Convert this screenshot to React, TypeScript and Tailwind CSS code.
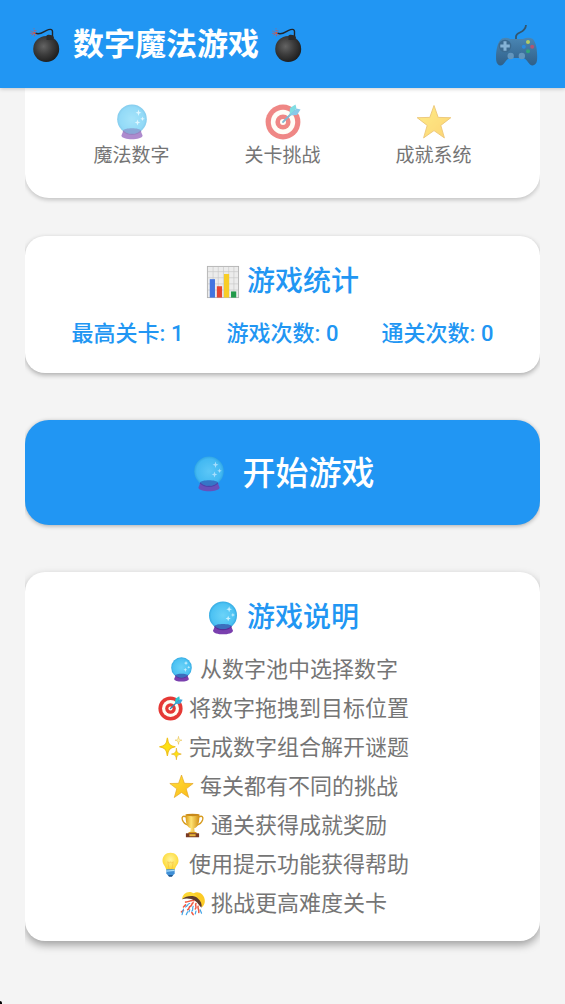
import type { ComponentType, ReactNode } from "react";

interface IconProps {
  className?: string;
}

// Gradients shared by all the icons on the page
function IconDefs() {
  return (
    <svg width="0" height="0" className="absolute" aria-hidden="true">
      <defs>
        <radialGradient id="bombBody" cx="0.4" cy="0.4" r="0.65">
          <stop offset="0" stopColor="#646464" />
          <stop offset="0.5" stopColor="#3c3c3c" />
          <stop offset="1" stopColor="#1c1c1c" />
        </radialGradient>
        <radialGradient id="ballGlass" cx="0.5" cy="0.5" r="0.52">
          <stop offset="0" stopColor="#6bd3f8" />
          <stop offset="0.8" stopColor="#4cc2f3" />
          <stop offset="1" stopColor="#2fa5de" />
        </radialGradient>
        <linearGradient id="starFill" x1="0" y1="0" x2="1" y2="1">
          <stop offset="0" stopColor="#ffe23b" />
          <stop offset="1" stopColor="#fbb818" />
        </linearGradient>
        <linearGradient id="padBody" x1="0" y1="0" x2="0" y2="1">
          <stop offset="0" stopColor="#4a86b4" />
          <stop offset="1" stopColor="#2f5f88" />
        </linearGradient>
        <linearGradient id="cupFill" x1="0" y1="0" x2="1" y2="0">
          <stop offset="0" stopColor="#d99a16" />
          <stop offset="0.4" stopColor="#ffe372" />
          <stop offset="1" stopColor="#d08c10" />
        </linearGradient>
        <radialGradient id="bulbFill" cx="0.5" cy="0.4" r="0.6">
          <stop offset="0" stopColor="#fff59a" />
          <stop offset="1" stopColor="#fdd62c" />
        </radialGradient>
      </defs>
    </svg>
  );
}

function BombIcon({ className }: IconProps) {
  return (
    <svg viewBox="0 0 36 36" className={className} aria-hidden="true">
      <path d="M25.5 9V4.5C25.5 2.5 24 2 21.5 2.6C17 3.8 14 8.5 8.5 6.2" fill="none" stroke="#20252a" strokeWidth="1.4" />
      <path
        d="M7.5 6L3.5 4M7.5 6L4 8.5M7.5 6L7 1.5M7.5 6L9.5 2.5M7.5 6L7.5 10M7.5 6L3 6.5M7.5 6L10.5 8.5"
        stroke="#e0503f"
        strokeWidth="0.9"
        strokeDasharray="1.2 0.8"
      />
      <circle cx="19.2" cy="22" r="13" fill="url(#bombBody)" />
      <path d="M19.5 8.5C20.5 7 25.5 7.5 27 10L26.5 13H19.5Z" fill="#2c2c2c" />
    </svg>
  );
}

function GamepadIcon({ className }: IconProps) {
  return (
    <svg viewBox="0 0 44 44" className={className} aria-hidden="true">
      <path d="M21 15V12.5C21 7.5 30.5 9.5 31 1" fill="none" stroke="#33566f" strokeWidth="1.8" />
      <path
        d="M7 14.5C10 13.2 13 13.6 15.5 15H28C31 13.4 34.5 13.2 37.5 14.8C42 18.5 42.6 31 42 36.5C41.6 40.5 38 42.8 35 40.5C32.5 38 31 34.8 28.5 34H14.5C12 34.8 10.5 38 8 40.5C5 43 1.6 40.5 1.2 36.5C.6 31 1.5 18 7 14.5Z"
        fill="url(#padBody)"
      />
      <circle cx="10" cy="22" r="6.3" fill="#3b6a90" />
      <path d="M8.5 17.3H11.5V20.5H14.8V23.5H11.5V26.7H8.5V23.5H5.3V20.5H8.5Z" fill="#85b3d6" />
      <circle cx="33" cy="18" r="2" fill="#b3cc66" />
      <circle cx="37.2" cy="22.7" r="2" fill="#b05575" />
      <circle cx="33" cy="27.2" r="2" fill="#2fa77c" />
      <circle cx="28.8" cy="22.7" r="2" fill="#2a8be0" />
      <circle cx="15.7" cy="32" r="3.2" fill="#6396bd" />
      <circle cx="26.8" cy="32" r="3.2" fill="#6396bd" />
    </svg>
  );
}

function CrystalBallIcon({ className }: IconProps) {
  return (
    <svg viewBox="0 0 36 36" className={className} aria-hidden="true">
      <path d="M9.5 26.5C9.5 23.5 26.5 23.5 26.5 26.5L28.6 31.5C28.2 36.6 7.8 36.6 7.4 31.5Z" fill="#7a3fae" />
      <circle cx="18" cy="15.3" r="14.8" fill="url(#ballGlass)" />
      <path d="M9 26.8C9.5 23.4 26.5 23.4 27 26.8C22.5 31 13.5 31 9 26.8Z" fill="#3b6fbd" />
      <path d="M9 26.8C13.5 31.5 22.5 31.5 27 26.8" fill="none" stroke="#55309a" strokeWidth="1.2" />
      <path
        d="M24.5 5.5L25.3 8L27.5 8.8L25.3 9.6L24.5 12L23.7 9.6L21.5 8.8L23.7 8ZM28.5 12.5L29.1 14.2L30.8 14.8L29.1 15.4L28.5 17L27.9 15.4L26.2 14.8L27.9 14.2ZM23.5 15.5L24.3 17.8L26.3 18.5L24.3 19.2L23.5 21.5L22.7 19.2L20.7 18.5L22.7 17.8Z"
        fill="#c9f1ff"
      />
    </svg>
  );
}

function TargetIcon({ className }: IconProps) {
  return (
    <svg viewBox="0 0 36 36" className={className} aria-hidden="true">
      <circle cx="18" cy="18" r="17.4" fill="#e53935" />
      <circle cx="18" cy="18" r="12.2" fill="#fffdf2" />
      <circle cx="18" cy="18" r="7.6" fill="#e53935" />
      <circle cx="18" cy="18" r="3" fill="#fffdf2" />
      <path d="M18 18L29 7" stroke="#3386b4" strokeWidth="1.8" strokeLinecap="round" />
      <path d="M24.5 11.5L25 4L30.5 .5L31.5 4.5Z" fill="#2cc5cf" />
      <path d="M24.5 11.5L31.5 4.5L35.5 5.5L32 11Z" fill="#3aa6dd" />
    </svg>
  );
}

function StarIcon({ className }: IconProps) {
  return (
    <svg viewBox="0 0 36 36" className={className} aria-hidden="true">
      <path
        d="M18 1.5L22.2 13.4L34.8 13.7L24.8 21.4L28.4 33.9L18 26.6L7.6 33.9L11.2 21.4L1.2 13.7L13.8 13.4Z"
        fill="url(#starFill)"
        stroke="#e0a01c"
        strokeWidth="0.9"
        strokeLinejoin="round"
      />
    </svg>
  );
}

function ChartIcon({ className }: IconProps) {
  return (
    <svg viewBox="0 0 36 36" className={className} aria-hidden="true">
      <rect x="1.5" y="1.5" width="33" height="33" fill="#ececec" stroke="#b4b4b4" />
      <path d="M2 7H34M2 13.5H34M2 20H34M2 26.5H34M7.5 2V34M13 2V34M18.5 2V34M24 2V34M29.5 2V34" stroke="#c9c9c9" strokeWidth="0.7" />
      <rect x="4" y="15" width="5.5" height="19.5" fill="#4274e0" />
      <rect x="11.5" y="22.5" width="5.5" height="12" fill="#e54632" />
      <rect x="19" y="9.5" width="5.5" height="25" fill="#f8cd26" />
      <rect x="26.5" y="28" width="5.5" height="6.5" fill="#229a4a" />
    </svg>
  );
}

function SparklesIcon({ className }: IconProps) {
  return (
    <svg viewBox="0 0 36 36" className={className} aria-hidden="true">
      <path d="M13.5 4C14.5 13 16.5 15.5 25 17C16.5 18.5 14.5 21 13.5 30C12.5 21 10.5 18.5 2 17C10.5 15.5 12.5 13 13.5 4Z" fill="#fde013" stroke="#efc21b" strokeWidth="1.6" />
      <path d="M26.5 19C27 24.5 28 26.5 33.5 27.5C28 28.5 27 30 26.5 35.5C26 30 25 28.5 19.5 27.5C25 26.5 26 24.5 26.5 19Z" fill="#fde013" stroke="#e5ac18" strokeWidth="1" />
      <path d="M29.5 2C30 6 30.5 7 34.5 7.5C30.5 8 30 9.5 29.5 13.5C29 9.5 28.5 8 24.5 7.5C28.5 7 29 6 29.5 2Z" fill="#fff6b0" stroke="#e5b73a" strokeWidth="0.7" />
    </svg>
  );
}

function TrophyIcon({ className }: IconProps) {
  return (
    <svg viewBox="0 0 36 36" className={className} aria-hidden="true">
      <path d="M9 5.5C4 3.5 2 5.5 3.5 10C5 14 8 16.5 12 17.5M27 5.5C32 3.5 34 5.5 32.5 10C31 14 28 16.5 24 17.5" fill="none" stroke="#d79b1e" strokeWidth="2" />
      <path d="M8 2H28C28 13 26.5 20.5 20.5 22L21 27H15L15.5 22C9.5 20.5 8 13 8 2Z" fill="url(#cupFill)" />
      <ellipse cx="18" cy="2.8" rx="10" ry="1.8" fill="#c8891a" />
      <path d="M11.5 29C12 26.5 24 26.5 24.5 29V30H11.5Z" fill="#d59616" />
      <rect x="8.5" y="29" width="19" height="6" rx="0.5" fill="#7a3a22" />
      <rect x="13.5" y="30.5" width="9" height="3" fill="#e6b33a" />
    </svg>
  );
}

function BulbIcon({ className }: IconProps) {
  return (
    <svg viewBox="0 0 36 36" className={className} aria-hidden="true">
      <path d="M18 1C25 1 29.5 6 29.5 12.5C29.5 18 25 20 24 26H12C11 20 6.5 18 6.5 12.5C6.5 6 11 1 18 1Z" fill="url(#bulbFill)" />
      <path d="M14 14L16 25H20L22 14L19.5 16L18 14L16.5 16Z" fill="none" stroke="#f4b93a" strokeWidth="0.8" />
      <path d="M12 25H24V31L20.5 35H15.5L12 31Z" fill="#3f8fd6" />
      <path d="M12 27.5L24 26.5" stroke="#a9dcfa" strokeWidth="2" />
      <path d="M14.5 33H21.5L20 35.5H16Z" fill="#23588f" />
    </svg>
  );
}

function ConfettiBallIcon({ className }: IconProps) {
  return (
    <svg viewBox="0 0 36 36" className={className} aria-hidden="true">
      <path d="M17 7C19 1 27 0 32 5C37 10 37 19 32 23C29 22 27 17 24.5 13C22 9.5 20 8 17 7Z" fill="#fccb26" />
      <path d="M3 12C3 5 10 0 17 2C21 3 24 6 25 9C20 7 9 7 3 12Z" fill="#fdd835" />
      <path d="M3 12C9 6.5 20 6 25 10C30 14 32 19 31 24C28 22 26 17 22 14.5C16 10.5 9 10 3 12Z" fill="#5d3a2c" />
      <path d="M20 14C15 13 12 16 8 16M19 17C16 18 18 21 15 22C12 23 14 26 11 27M23 18C21 21 25 23 22 26M8 20L5 23M26 22C25 25 28 27 27 31M5 28L2 30M17 31L19 34" fill="none" stroke="#ef5a44" strokeWidth="2.2" strokeLinecap="round" />
      <path d="M14 18C11 18 11 22 8 23M19 22C17 25 20 27 17 29M23 29L22 33M11 30L9 34M29 27L31 32M5 26L3 34M14 27L13 30" fill="none" stroke="#42a5e8" strokeWidth="1.7" strokeLinecap="round" />
    </svg>
  );
}

const features: { icon: ComponentType<IconProps>; label: string }[] = [
  { icon: CrystalBallIcon, label: "魔法数字" },
  { icon: TargetIcon, label: "关卡挑战" },
  { icon: StarIcon, label: "成就系统" },
];

const stats = [
  { label: "最高关卡", value: 1 },
  { label: "游戏次数", value: 0 },
  { label: "通关次数", value: 0 },
];

const rules: { icon: ComponentType<IconProps>; text: string }[] = [
  { icon: CrystalBallIcon, text: "从数字池中选择数字" },
  { icon: TargetIcon, text: "将数字拖拽到目标位置" },
  { icon: SparklesIcon, text: "完成数字组合解开谜题" },
  { icon: StarIcon, text: "每关都有不同的挑战" },
  { icon: TrophyIcon, text: "通关获得成就奖励" },
  { icon: BulbIcon, text: "使用提示功能获得帮助" },
  { icon: ConfettiBallIcon, text: "挑战更高难度关卡" },
];

function CardTitle({ icon: Icon, children }: { icon: ComponentType<IconProps>; children: ReactNode }) {
  return (
    <h2 className="flex items-center justify-center gap-[7px] text-[28px] leading-[42px] font-medium text-[#2196f3]">
      <Icon className="w-[34px] h-[34px]" />
      {children}
    </h2>
  );
}

export default function App() {
  return (
    <div className="relative min-h-screen bg-[#f4f4f4] font-[Roboto,'Noto_Sans_CJK_SC',sans-serif]">
      <IconDefs />
      <header className="sticky top-0 z-10 flex h-[88px] items-center justify-between bg-[#2196f3] pt-[2px] pl-[27px] pr-[26px] shadow-[0_1px_4px_rgba(0,0,0,0.2)]">
        <h1 className="flex items-center gap-[10px] text-[31px] font-bold text-white">
          <BombIcon className="w-9 h-9" />
          数字魔法游戏
          <BombIcon className="w-9 h-9" />
        </h1>
        <button type="button" aria-label="游戏" className="mt-[2px]">
          <GamepadIcon className="w-11 h-11" />
        </button>
      </header>

      <main className="px-[25px] pb-[63px]">
        <section className="rounded-b-3xl bg-white px-[31px] pt-4 pb-[28px] shadow-[0_2px_4px_rgba(0,0,0,0.2)] [clip-path:inset(-20px_0px)]">
          <ul className="grid grid-cols-3">
            {features.map(({ icon: Icon, label }) => (
              <li key={label} className="flex flex-col items-center gap-[2px] text-[19px] leading-7 text-[#757575]">
                <Icon className="w-9 h-9 opacity-60" />
                {label}
              </li>
            ))}
          </ul>
        </section>

        <section className="mt-[38px] rounded-[20px] bg-white px-[25px] pt-[25px] pb-[23px] shadow-[0_2px_5px_rgba(0,0,0,0.3)] [clip-path:inset(-20px_0px)]">
          <CardTitle icon={ChartIcon}>游戏统计</CardTitle>
          <ul className="mt-[15px] grid grid-cols-3 text-center text-[22px] leading-8 font-medium text-[#2196f3]">
            {stats.map((s) => (
              <li key={s.label}>
                {s.label}: {s.value}
              </li>
            ))}
          </ul>
        </section>

        <button
          type="button"
          className="mt-[47px] flex h-[105px] w-full items-center justify-center gap-4 rounded-3xl bg-[#2196f3] pt-[2px] text-[33px] font-medium text-white shadow-[0_1px_4px_rgba(0,0,0,0.3)] [clip-path:inset(-20px_0px)]"
        >
          <CrystalBallIcon className="w-9 h-9 opacity-80" />
          开始游戏
        </button>

        <section className="mt-[47px] rounded-[20px] bg-white px-6 pt-[25px] pb-[18px] shadow-[0_4px_8px_rgba(0,0,0,0.35)] [clip-path:inset(-20px_0px)]">
          <CardTitle icon={CrystalBallIcon}>游戏说明</CardTitle>
          <ul className="mt-[11px] pl-[2px] text-[22px] leading-[39px] text-[#757575]">
            {rules.map(({ icon: Icon, text }) => (
              <li key={text} className="flex items-center justify-center gap-[6px]">
                <Icon className="w-[25px] h-[25px]" />
                {text}
              </li>
            ))}
          </ul>
        </section>
      </main>

      <span className="absolute bottom-0 left-0 h-[3px] w-[2px] rounded-tr-xs bg-black" />
    </div>
  );
}
